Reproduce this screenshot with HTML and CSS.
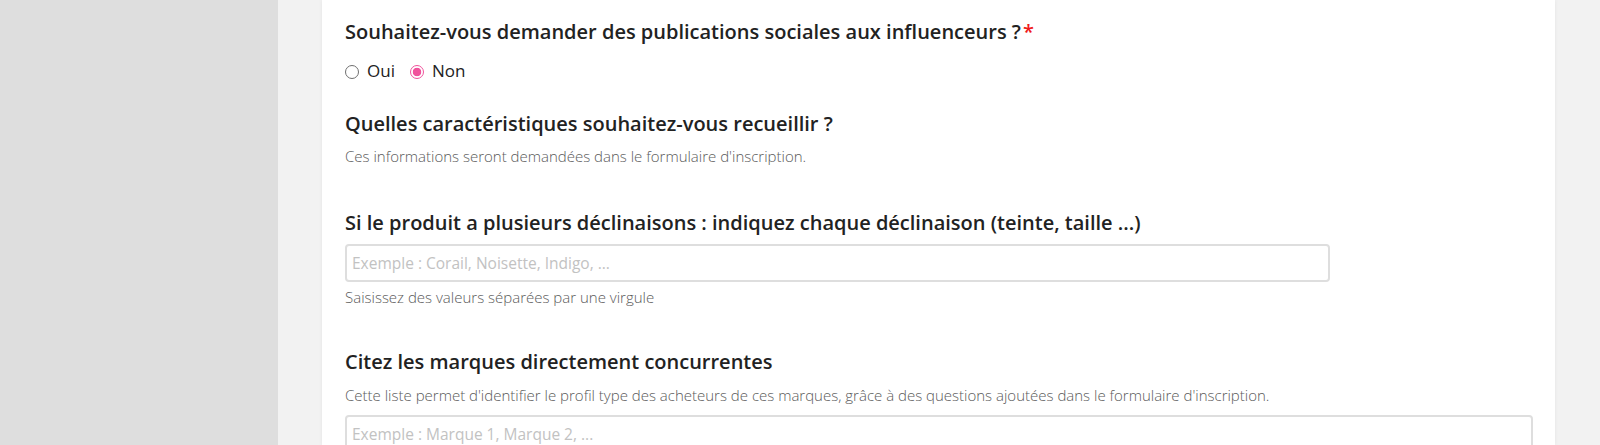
FILE: index.html
```html
<!DOCTYPE html>
<html lang="fr">
<head>
<meta charset="utf-8">
<title>Formulaire</title>
<link rel="stylesheet" href="styles.css">
</head>
<body>
<div class="layout">
  <aside class="sidebar"></aside>
  <main class="main">
    <section class="card">
      <h2 class="q q-first">Souhaitez-vous demander des publications sociales aux influenceurs ?<span class="req">*</span></h2>
      <div class="radios">
        <label class="radio"><span class="dot"></span>Oui</label>
        <label class="radio"><span class="dot checked"></span>Non</label>
      </div>
      <h2 class="q q-second">Quelles caractéristiques souhaitez-vous recueillir ?</h2>
      <p class="desc">Ces informations seront demandées dans le formulaire d'inscription.</p>
      <h2 class="q q-third">Si le produit a plusieurs déclinaisons : indiquez chaque déclinaison (teinte, taille ...)</h2>
      <input class="field field-short" type="text" placeholder="Exemple : Corail, Noisette, Indigo, ...">
      <p class="help">Saisissez des valeurs séparées par une virgule</p>
      <h2 class="q q-fourth">Citez les marques directement concurrentes</h2>
      <p class="desc desc-tight">Cette liste permet d'identifier le profil type des acheteurs de ces marques, grâce à des questions ajoutées dans le formulaire d'inscription.</p>
      <input class="field" type="text" placeholder="Exemple : Marque 1, Marque 2, ...">
    </section>
  </main>
</div>
</body>
</html>
```
FILE: styles.css
```css
* { box-sizing: border-box; }
html, body { margin: 0; padding: 0; }
body {
  font-family: "Open Sans", "Liberation Sans", sans-serif;
  color: #222;
  height: 445px;
  overflow: hidden;
}
.layout {
  display: flex;
  height: 445px;
}
.sidebar {
  width: 278px;
  flex: none;
  background: #dedede;
}
.main {
  flex: 1;
  background: #f2f2f2;
  padding: 0 45px 0 44px;
  display: flex;
}
.card {
  flex: 1;
  background: #fff;
  padding: 0 22px 0 23px;
  box-shadow: 0 0 4px rgba(0,0,0,0.06);
  display: flex;
  flex-direction: column;
  align-items: flex-start;
}
.q {
  font-size: 20px;
  line-height: 26px;
  font-weight: 600;
  margin: 0;
  color: #222;
}
.q-first { margin-top: 19px; }
.q-second { margin-top: 28px; }
.q-third { margin-top: 44px; }
.q-fourth { margin-top: 42px; }
.req { color: #f01a1a; margin-left: 2px; }
.radios {
  display: flex;
  gap: 15px;
  margin-top: 14px;
  height: 24px;
  align-items: center;
}
.radio {
  display: flex;
  align-items: center;
  font-size: 17px;
  line-height: 24px;
  color: #222;
}
.dot {
  width: 14px;
  height: 14px;
  border-radius: 50%;
  border: 1px solid #6f6f6f;
  margin-right: 8px;
  display: inline-block;
  position: relative;
  top: 1px;
}
.dot.checked {
  border: 1.5px solid #f0529c;
  background: radial-gradient(circle, #f0529c 0 4px, #fff 4.6px);
}
.desc, .help {
  font-size: 15px;
  line-height: 20px;
  font-weight: 300;
  color: #5a5a5a;
  margin: 9px 0 0;
}
.desc-tight { margin-top: 10px; }
.help { margin-top: 5px; }
.field {
  width: 100%;
  height: 38px;
  border: 2px solid #dedede;
  border-radius: 4px;
  padding: 0 6px 0 5px;
  font-family: inherit;
  font-size: 15.5px;
  color: #333;
  margin-top: 8px;
  outline: none;
  flex: none;
}
.desc + .field { margin-top: 10px; }
.field-short { width: 985px; }
.field::placeholder { color: #c2c2c2; font-weight: 400; }
```
